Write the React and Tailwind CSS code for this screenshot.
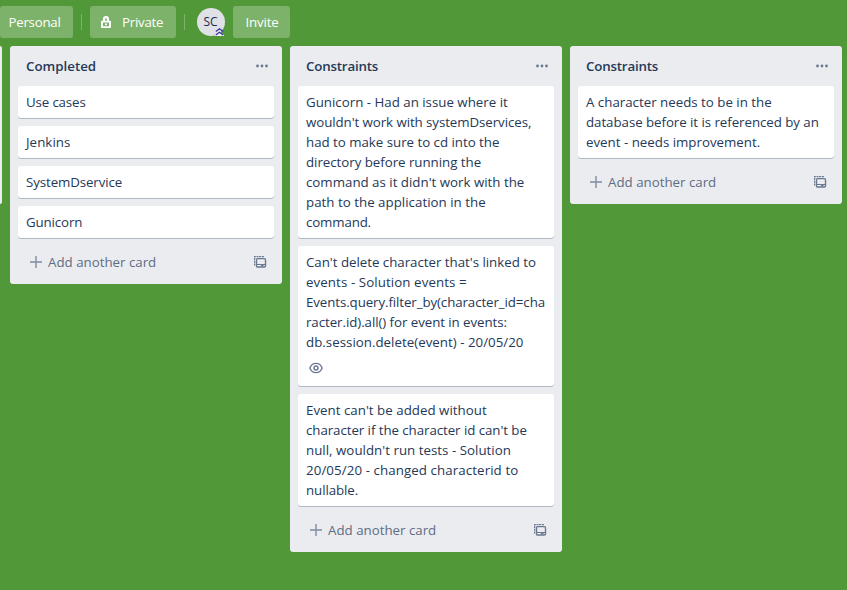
import React from "react";

// Each line is its text, optionally with a letter-spacing class.
const lists = [
  {
    title: "Completed",
    tracking: "tracking-normal",
    cards: [
      { lines: [["Use cases", "tracking-[-0.14px]"]] },
      { lines: [["Jenkins", "tracking-[0.05px]"]] },
      { lines: [["SystemDservice", "tracking-[-0.1px]"]] },
      { lines: [["Gunicorn", "tracking-[-0.12px]"]] },
    ],
  },
  {
    title: "Constraints",
    tracking: "tracking-[-0.18px]",
    cards: [
      {
        lines: [
          ["Gunicorn - Had an issue where it"],
          ["wouldn't work with systemDservices,", "tracking-[-0.07px]"],
          ["had to make sure to cd into the", "tracking-[-0.02px]"],
          ["directory before running the", "tracking-[-0.03px]"],
          ["command as it didn't work with the"],
          ["path to the application in the", "tracking-[0.02px]"],
          ["command.", "tracking-[-0.15px]"],
        ],
      },
      {
        watched: true,
        lines: [
          ["Can't delete character that's linked to", "tracking-[-0.02px]"],
          ["events - Solution events =", "tracking-[0.09px]"],
          ["Events.query.filter_by(character_id=cha", "tracking-[-0.09px]"],
          ["racter.id).all() for event in events:", "tracking-[-0.06px]"],
          ["db.session.delete(event) - 20/05/20", "tracking-[0.02px]"],
        ],
      },
      {
        lines: [
          ["Event can't be added without", "tracking-[0.02px]"],
          ["character if the character id can't be", "tracking-[-0.06px]"],
          ["null, wouldn't run tests - Solution", "tracking-[0.02px]"],
          ["20/05/20 - changed characterid to", "tracking-[0.09px]"],
          ["nullable.", "tracking-[-0.09px]"],
        ],
      },
    ],
  },
  {
    title: "Constraints",
    tracking: "tracking-[-0.18px]",
    cards: [
      {
        lines: [
          ["A character needs to be in the"],
          ["database before it is referenced by an", "tracking-[-0.05px]"],
          ["event - needs improvement."],
        ],
      },
    ],
  },
];

function LockIcon() {
  return (
    <svg width="12" height="14" viewBox="0 0 12 14" fill="none">
      <path d="M4 6V4.200a2 2 0 0 1 4 0V6" stroke="white" strokeWidth="2.200" />
      <path fillRule="evenodd" fill="white" d="M2 5.700h8a1 1 0 0 1 1 1v5.300a1 1 0 0 1-1 1H2a1 1 0 0 1-1-1v-5.300a1 1 0 0 1 1-1ZM3 7.500v3.700h6V7.500Z" />
      <path d="M5 8.500h2v1.700H5z" fill="white" />
    </svg>
  );
}

function TemplateIcon() {
  return (
    <svg width="14" height="14" viewBox="0 0 14 14" fill="none" stroke="#6b7891">
      <path d="M1.600 10.500V1.600H11" strokeWidth="1.200" strokeDasharray="2 .7" />
      <rect x="3.500" y="3.600" width="9" height="8.400" rx="1" strokeWidth="1.400" />
      <path d="M4 9.500h8.400" strokeWidth="1" />
      <path d="M8 10.700h2.500" strokeWidth="1.400" />
    </svg>
  );
}

function EyeIcon() {
  return (
    <svg width="14" height="12" viewBox="0 0 14 12" fill="none" stroke="#6b7891">
      <path d="M.8 6C2 2.700 4.200 1.300 7 1.300S12 2.700 13.200 6C12 9.300 9.800 10.700 7 10.700S2 9.300.8 6Z" strokeWidth="1.300" />
      <circle cx="7" cy="6" r="2" strokeWidth="1.400" />
    </svg>
  );
}

function Card({ card }) {
  return (
    <div className="rounded-[3px] bg-white px-2 py-1.5 text-[#253858] shadow-[0_1px_0_#b3bac5]">
      {card.lines.map(([text, tracking]) => (
        <div key={text} className={`h-5 whitespace-nowrap ${tracking || ""}`}>{text}</div>
      ))}
      {card.watched && (
        <div className="flex h-7 items-center pl-[3px] pt-[3px]">
          <EyeIcon />
        </div>
      )}
    </div>
  );
}

function List({ list }) {
  return (
    <section className="w-[272px] shrink-0 rounded-[3px] bg-[#ebecf0] px-2 pb-2">
      <header className="flex h-10 items-center justify-between pl-2 pr-[5px]">
        <h2 className={`font-semibold text-[#253858] ${list.tracking}`}>{list.title}</h2>
        <svg width="13" height="4" viewBox="0 0 13 4" fill="#6b7891">
          <circle cx="1.500" cy="2" r="1.400" />
          <circle cx="6" cy="2" r="1.400" />
          <circle cx="10.500" cy="2" r="1.400" />
        </svg>
      </header>
      <div className="flex flex-col gap-2">
        {list.cards.map((card) => (
          <Card key={card.lines[0][0]} card={card} />
        ))}
      </div>
      <footer className="mt-2.5 flex h-7 items-center pl-3 pr-[7px] text-[#5e6c84]">
        <svg width="12" height="12" viewBox="0 0 12 12" className="mr-1.5" stroke="#7f8ba1" strokeWidth="1.400">
          <path d="M6 0v12M0 6h12" />
        </svg>
        <span className="grow">Add another card</span>
        <TemplateIcon />
      </footer>
    </section>
  );
}

export default function App() {
  return (
    <div className="h-[590px] w-[847px] overflow-hidden bg-[#519839] font-['Open_Sans','Noto_Sans',sans-serif] text-[13.3px] leading-5 text-[#172b4d]">
      <nav className="flex h-[46px] items-center pb-0.5 text-white">
        <button className="h-8 w-[73px] rounded-[3px] bg-[#7db26a] pr-1 font-medium tracking-[-0.25px]">Personal</button>
        <span className="ml-2 h-4 w-px bg-[#7db26a]" />
        <button className="ml-2 flex h-8 w-[86px] items-center rounded-[3px] bg-[#7db26a] pl-2.5">
          <LockIcon />
          <span className="ml-[10px] font-medium tracking-[-0.25px]">Private</span>
        </button>
        <span className="ml-2 h-4 w-px bg-[#7db26a]" />
        <div className="relative ml-3 flex size-7 items-center justify-center rounded-full bg-[#dfe1e6] text-[12px] font-medium text-[#172b4d]">
          <span className="mr-px">SC</span>
          <svg className="absolute bottom-0 right-px" width="9" height="9" viewBox="0 0 9 9" fill="none">
            <path d="M0 8 4.500 4.500 9 8v1H0Z" fill="#eef0f4" />
            <path d="M.8 4.500 4.500 1.700l3.700 2.800M.8 8 4.500 5.200 8.200 8" stroke="#3732a0" strokeWidth="1.200" />
          </svg>
        </div>
        <button className="ml-2 h-8 w-[57px] rounded-[3px] bg-[#7db26a] pl-px font-medium tracking-[-0.2px]">Invite</button>
      </nav>
      <main className="flex items-start gap-2">
        <div className="h-[158px] w-0.5 rounded-r-[3px] bg-[#ebecf0]" />
        {lists.map((list, index) => (
          <List key={index} list={list} />
        ))}
      </main>
    </div>
  );
}
